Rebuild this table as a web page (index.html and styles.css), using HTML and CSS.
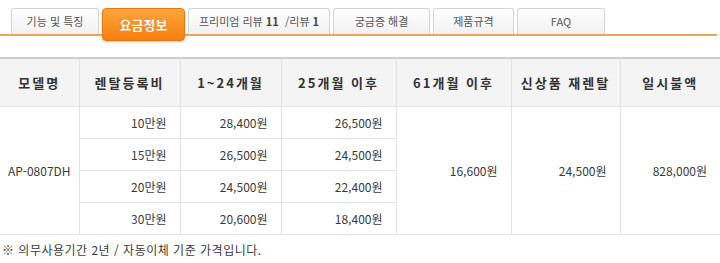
FILE: index.html
```html
<!DOCTYPE html>
<html lang="ko">
<head>
<meta charset="utf-8">
<link rel="stylesheet" href="styles.css">
</head>
<body>
<div class="tabs">
  <div class="tab" style="width:88px">기능 및 특징</div>
  <div class="tab active" style="width:83px">요금정보</div>
  <div class="tab" style="width:142px">프리미엄 리뷰 <b>11</b> &nbsp;/리뷰 <b>1</b></div>
  <div class="tab" style="width:97px">궁금증 해결</div>
  <div class="tab" style="width:81px">제품규격</div>
  <div class="tab" style="width:88px">FAQ</div>
</div>
<table class="price">
  <colgroup>
    <col style="width:79px"><col style="width:101px"><col style="width:101px"><col style="width:115px"><col style="width:115px"><col style="width:109px"><col style="width:100px">
  </colgroup>
  <thead>
    <tr>
      <th>모델명</th><th>렌탈등록비</th><th>1~24개월</th><th>25개월 이후</th><th>61개월 이후</th><th>신상품 재렌탈</th><th>일시불액</th>
    </tr>
  </thead>
  <tbody>
    <tr>
      <td rowspan="4" class="center">AP-0807DH</td>
      <td>10만원</td><td>28,400원</td><td>26,500원</td>
      <td rowspan="4">16,600원</td><td rowspan="4">24,500원</td><td rowspan="4">828,000원</td>
    </tr>
    <tr><td>15만원</td><td>26,500원</td><td>24,500원</td></tr>
    <tr><td>20만원</td><td>24,500원</td><td>22,400원</td></tr>
    <tr><td>30만원</td><td>20,600원</td><td>18,400원</td></tr>
  </tbody>
</table>
<p class="note">※ 의무사용기간 2년 / 자동이체 기준 가격입니다.</p>
</body>
</html>
```
FILE: styles.css
```css
html, body {
  margin: 0;
  padding: 0;
  background: #fff;
  font-family: "Noto Sans CJK KR", "Noto Sans", sans-serif;
  color: #444;
}
.tabs {
  display: flex;
  align-items: flex-start;
  gap: 3px;
  height: 26px;
  margin-top: 8px;
  padding-left: 11px;
  width: 706px;
  border-bottom: 2px solid #e3a956;
}
.tab {
  box-sizing: border-box;
  height: 26px;
  border: 1px solid #d4d4d4;
  border-bottom: none;
  border-radius: 3px 3px 0 0;
  background: linear-gradient(#ffffff, #f1f1f1);
  font-size: 11px;
  line-height: 25px;
  text-align: center;
  color: #555;
  white-space: nowrap;
}
.tab b { font-weight: bold; color: #444; }
.tab.active {
  height: 33px;
  border: 1px solid #e07a10;
  border-radius: 4px;
  background: linear-gradient(#ffa53c, #f57f0f);
  color: #fff;
  font-weight: bold;
  font-size: 13px;
  line-height: 32px;
  text-shadow: 0 0 1px #c9650a;
  box-shadow: 0 1px 2px rgba(160, 80, 0, 0.35);
  position: relative;
  z-index: 1;
}
.price {
  margin-top: 21px;
  width: 720px;
  table-layout: fixed;
  border-collapse: collapse;
  border-top: 2px solid #cfcfcf;
  font-size: 12px;
}
.price th {
  height: 47px;
  padding: 0;
  background: #f4f4f4;
  border-left: 1px solid #e2e2e2;
  border-bottom: 1px solid #e2e2e2;
  font-size: 13px;
  font-weight: bold;
  letter-spacing: 2px;
  color: #333;
}
.price th:first-child, .price td.center { border-left: none; }
.price td {
  height: 31px;
  padding: 0 13px 0 0;
  border-left: 1px solid #e2e2e2;
  border-bottom: 1px solid #e2e2e2;
  text-align: right;
  color: #3a3a3a;
  line-height: 16px;
}
.price td.center {
  text-align: center;
  padding: 0;
}
.note {
  margin: 7px 0 0 2px;
  font-size: 12px;
  line-height: 16px;
  color: #3a3a3a;
  letter-spacing: 0.5px;
}
```
